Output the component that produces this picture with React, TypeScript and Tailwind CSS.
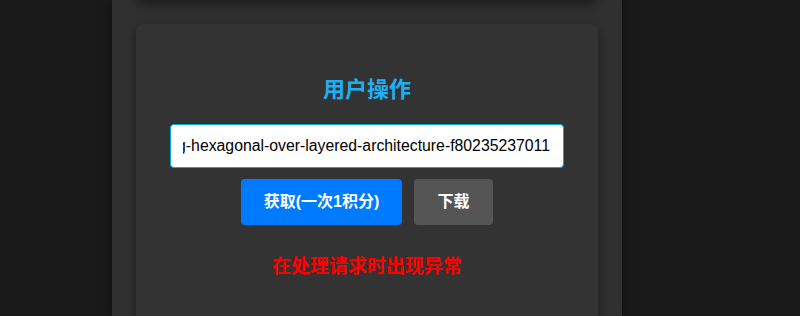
import React from "react";

export default function App() {
  return (
    <div className="min-h-[316px] h-[316px] overflow-hidden bg-[#1a1a1a] flex justify-center" style={{ fontFamily: '"Liberation Sans", "Noto Sans CJK SC", sans-serif' }}>
      <div className="w-[510px] ml-[-66px] bg-[#303030] shadow-[0_0_12px_rgba(0,0,0,0.5)] px-6 flex flex-col">
        <div className="mt-[-100px] h-[100px] shrink-0 rounded-lg bg-[#333333] shadow-[0_4px_12px_rgba(0,0,0,0.45)]" />
        <div className="mt-6 rounded-lg bg-[#333333] shadow-[0_4px_12px_rgba(0,0,0,0.45)] pt-[49px] pb-16 flex flex-col items-center">
          <h2 className="text-[22px] leading-[28px] font-bold text-[#1eb0f5]" style={{ fontFamily: '"Noto Sans CJK SC", sans-serif' }}>用户操作</h2>
          <div className="mt-[23px] w-[394px] h-[44px] bg-white border border-[#00aaf0] rounded-[4px] pl-3 pr-[13px] flex items-center">
            <div className="flex-1 overflow-hidden whitespace-nowrap flex justify-end">
              <span className="text-[15.8px] text-black shrink-0" style={{ fontFamily: '"Liberation Sans", sans-serif' }}>choosing-hexagonal-over-layered-architecture-f80235237011</span>
            </div>
          </div>
          <div className="mt-[11px] flex gap-3">
            <button className="h-[46px] w-[161px] rounded-[4px] bg-[#007bff] text-white text-[16px] font-bold">获取(一次1积分)</button>
            <button className="h-[46px] w-[79px] rounded-[4px] bg-[#555555] text-white text-[16px] font-bold">下载</button>
          </div>
          <p className="mt-[27px] text-[19px] leading-[26px] font-bold text-[#ff0000]" style={{ fontFamily: '"Noto Sans CJK SC", sans-serif' }}>在处理请求时出现异常</p>
        </div>
      </div>
    </div>
  );
}
